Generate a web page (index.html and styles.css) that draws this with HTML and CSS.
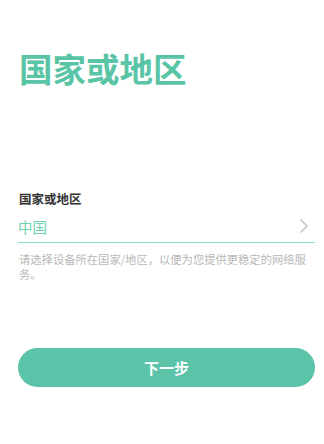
FILE: index.html
```html
<!DOCTYPE html>
<html>
	<head>
		<title>国家或地区</title>
		<link rel="stylesheet" href="styles.css">
	</head>
	<body>
		<div class="page">
			<h1 class="title">国家或地区</h1>
			<div class="field">
				<div class="label">国家或地区</div>
				<div class="select">
					<span class="value">中国</span>
					<svg class="chevron" width="10" height="16" viewBox="0 0 10 16">
						<path d="M2 2 L8 8 L2 14" fill="none" stroke="#c4c4c4" stroke-width="1.6" stroke-linecap="round" stroke-linejoin="round"/>
					</svg>
				</div>
				<p class="hint">请选择设备所在国家/地区，以便为您提供更稳定的网络服务。</p>
			</div>
			<button class="next">下一步</button>
		</div>
	</body>
</html>
```

FILE: styles.css
```css
body {
	margin: 0;
	background: #fff;
	font-family: "Noto Sans CJK SC", "Noto Sans", sans-serif;
}
.page {
	padding: 0 9px 0 18px;
}
.title {
	margin: 0;
	padding-top: 48px;
	font-size: 33.5px;
	line-height: 40px;
	font-weight: 700;
	color: #5ac5a6;
	padding-left: 1px;
}
.field {
	margin-top: 102px;
}
.label {
	font-size: 12.5px;
	line-height: 18px;
	font-weight: 700;
	color: #333;
	padding-left: 1px;
}
.select {
	display: flex;
	align-items: center;
	justify-content: space-between;
	height: 32px;
	border-bottom: 1.5px solid #8ee0c5;
	padding-right: 6px;
	margin-top: 2px;
}
.value {
	font-size: 14.5px;
	color: #6fd2b2;
}
.hint {
	margin: 9px 0 0;
	font-size: 11.3px;
	line-height: 15px;
	color: #b8b8b8;
	padding-left: 1px;
}
.next {
	display: block;
	width: 297px;
	height: 39px;
	margin-top: 66px;
	border: 0;
	border-radius: 20px;
	background: #5bc4a8;
	color: #fff;
	font-family: inherit;
	font-size: 15px;
	font-weight: 700;
}
```
